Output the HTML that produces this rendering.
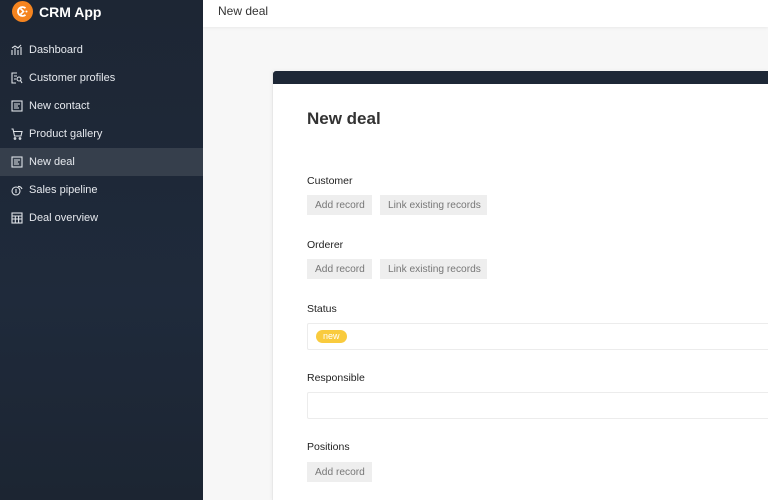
<!DOCTYPE html>
<html><head><meta charset="utf-8"><style>
*{margin:0;padding:0;box-sizing:border-box}
html,body{width:768px;height:500px;overflow:hidden}
body{font-family:"Liberation Sans",sans-serif;background:#f7f7f7;position:relative}
.sb{position:absolute;left:0;top:0;width:203px;height:500px;background:linear-gradient(180deg,#1d2634 0%,#1f2a3b 60%,#1c2532 100%)}
.logo{position:absolute;left:12px;top:1px;width:21px;height:21px;border-radius:50%;background:#f5841f}
.brand{position:absolute;left:39px;top:4px;color:#fff;font-weight:bold;font-size:14px}
.nav{position:absolute;left:0;width:203px;height:28px;color:#e6e9ee;font-size:11px;line-height:28px;padding-left:29px}
.nav.act{background:#363f4c}
.nav svg{position:absolute;left:11px;top:8px}
.top{position:absolute;left:203px;top:0;width:565px;height:27px;background:#fff;box-shadow:0 1px 3px rgba(0,0,0,.06)}
.top span{position:absolute;left:15px;top:4px;font-size:12px;color:#333}
.card{position:absolute;left:272px;top:71px;width:496px;height:429px;background:#fff;border-left:1px solid #e8e8e8;box-shadow:0 0 4px rgba(0,0,0,.05)}
.cbar{height:13px;background:#1d2736;border-radius:3px 0 0 0}
h1{position:absolute;left:34px;top:38px;font-size:17px;color:#333;font-weight:bold}
.lbl{position:absolute;left:34px;font-size:10.5px;color:#222}
.btn{position:absolute;height:20px;background:#eeeeee;color:#777;font-size:10.2px;line-height:21px;padding:0 8px;white-space:nowrap}
.inp{position:absolute;left:34px;width:480px;height:27px;border:1px solid #ececec;border-radius:2px;background:#fff}
.tag{position:absolute;left:8px;top:6px;height:13px;padding:0 7px;background:#f9cb3e;border-radius:7px;color:#fff;font-size:9px;line-height:13px}
</style></head><body>
<div class="sb">
<div class="logo"><svg width="21" height="21" viewBox="0 0 21 21"><path d="M13.5 7.2A4.5 4.5 0 1 0 13.5 13.8" fill="none" stroke="#fff" stroke-width="1.8"/><path d="M8.5 7.5L11.5 10.5L8.5 13.5" fill="none" stroke="#fff" stroke-width="1.6"/><circle cx="14.5" cy="10.5" r="1" fill="#fff"/></svg></div>
<div class="brand">CRM App</div>
<div class="nav" style="top:36px"><svg width="12" height="12" viewBox="0 0 12 12" fill="none" stroke="#dfe3e8" stroke-width="1.1"><path d="M1 11V6M4 11V4M7 11V6M10 11V3M1 4L4 2L7 4L10 1"/></svg>Dashboard</div>
<div class="nav" style="top:64px"><svg width="12" height="12" viewBox="0 0 12 12" fill="none" stroke="#dfe3e8" stroke-width="1.1"><path d="M6 1H1V11H5M3 4H6M3 7H5"/><circle cx="8" cy="7" r="2"/><path d="M9.5 8.5L11 11"/></svg>Customer profiles</div>
<div class="nav" style="top:92px"><svg width="12" height="12" viewBox="0 0 12 12" fill="none" stroke="#dfe3e8" stroke-width="1.1"><rect x="1" y="1" width="10" height="10"/><path d="M3 4H9M3 6H7M3 8H8"/></svg>New contact</div>
<div class="nav" style="top:120px"><svg width="12" height="12" viewBox="0 0 12 12" fill="none" stroke="#dfe3e8" stroke-width="1.1"><path d="M0.5 1H2L3.5 8H10L11 3.5H3"/><circle cx="4" cy="10.5" r=".8"/><circle cx="9" cy="10.5" r=".8"/></svg>Product gallery</div>
<div class="nav act" style="top:148px"><svg width="12" height="12" viewBox="0 0 12 12" fill="none" stroke="#dfe3e8" stroke-width="1.1"><rect x="1" y="1" width="10" height="10"/><path d="M3 4H9M3 6H7M3 8H8"/></svg>New deal</div>
<div class="nav" style="top:176px"><svg width="12" height="12" viewBox="0 0 12 12" fill="none" stroke="#dfe3e8" stroke-width="1.1"><circle cx="5" cy="7" r="4"/><path d="M7 2.5A4 4 0 0 1 11 5M5 5V9"/></svg>Sales pipeline</div>
<div class="nav" style="top:204px"><svg width="12" height="12" viewBox="0 0 12 12" fill="none" stroke="#dfe3e8" stroke-width="1.1"><rect x="1" y="1" width="10" height="10"/><path d="M1 4H11M1 7H11M4.3 4V11M7.6 4V11"/></svg>Deal overview</div>
</div>
<div class="top"><span>New deal</span></div>
<div class="card"><div class="cbar"></div>
<h1>New deal</h1>
<div class="lbl" style="top:104px">Customer</div>
<div class="btn" style="left:34px;top:124px;width:65px">Add record</div>
<div class="btn" style="left:107px;top:124px;width:107px">Link existing records</div>
<div class="lbl" style="top:168px">Orderer</div>
<div class="btn" style="left:34px;top:188px;width:65px">Add record</div>
<div class="btn" style="left:107px;top:188px;width:107px">Link existing records</div>
<div class="lbl" style="top:232px">Status</div>
<div class="inp" style="top:252px"><span class="tag">new</span></div>
<div class="lbl" style="top:301px">Responsible</div>
<div class="inp" style="top:321px"></div>
<div class="lbl" style="top:370px">Positions</div>
<div class="btn" style="left:34px;top:391px;width:65px">Add record</div>
</div>
</body></html>
